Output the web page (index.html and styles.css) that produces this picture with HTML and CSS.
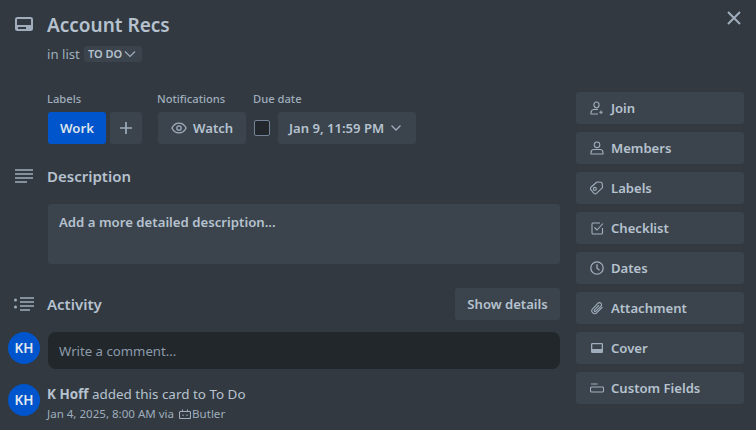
FILE: index.html
```html
<!DOCTYPE html>
<html lang="en">
<head>
<meta charset="utf-8">
<title>Account Recs</title>
<link rel="stylesheet" href="styles.css">
</head>
<body>
<div class="dialog">
  <button class="close" aria-label="Close">
    <svg viewBox="0 0 16 16" width="16" height="16"><path d="M2 2l12 12M14 2L2 14" class="st2"/></svg>
  </button>
  <header class="head">
    <svg class="gut-icon" viewBox="0 0 18 14" width="18" height="14"><path fill-rule="evenodd" d="M2.5 0h13A2.5 2.5 0 0 1 18 2.5v9a2.5 2.5 0 0 1-2.5 2.5h-13A2.5 2.5 0 0 1 0 11.500v-9A2.500 2.500 0 0 1 2.500 0zm0 2a.5.5 0 0 0-.5.500V8h14V2.500a.5.500 0 0 0-.5-.5zM3 10v2h8v-2z" fill="#9fadbc"/></svg>
    <div>
      <h1 class="title">Account Recs</h1>
      <p class="inlist">in list <span class="listpill">TO DO<svg viewBox="0 0 12 8" width="12" height="8"><path d="M1 1.500l5 5 5-5" class="st1"/></svg></span></p>
    </div>
  </header>
  <div class="columns">
    <main class="main">
      <div class="meta">
        <div class="meta-group labels-group">
          <div class="meta-label">Labels</div>
          <div class="meta-row">
            <span class="label-work">Work</span>
            <span class="btn square"><svg viewBox="0 0 14 14" width="14" height="14"><path d="M7 1v12M1 7h12" class="st15"/></svg></span>
          </div>
        </div>
        <div class="meta-group">
          <div class="meta-label">Notifications</div>
          <div class="meta-row">
            <span class="btn watch"><svg viewBox="0 0 16 12" width="16" height="12"><path d="M.9 6C2.500 2.800 5 1.100 8 1.100S13.500 2.800 15.100 6C13.500 9.200 11 10.900 8 10.900S2.500 9.200.9 6z" class="st12"/><circle cx="8" cy="6" r="2.200" class="st12"/></svg>Watch</span>
          </div>
        </div>
        <div class="meta-group">
          <div class="meta-label">Due date</div>
          <div class="meta-row">
            <span class="check"></span>
            <span class="btn due">Jan 9, 11:59 PM<svg viewBox="0 0 12 8" width="12" height="8"><path d="M1.500 1.500l4.500 4.500 4.500-4.500" class="st12"/></svg></span>
          </div>
        </div>
      </div>

      <section class="sec-desc">
        <div class="sec-head">
          <svg class="gut-icon" viewBox="0 0 18 14" width="18" height="14"><path d="M0 1h18M0 5h18M0 9h18M0 13h12" class="st15"/></svg>
          <h2>Description</h2>
        </div>
        <div class="desc-box">Add a more detailed description...</div>
      </section>

      <section class="sec-act">
        <div class="sec-head">
          <svg class="gut-icon act-icon" viewBox="0 0 20 14" width="20" height="14"><circle cx="1.500" cy="3" r="1.500" fill="#9fadbc"/><circle cx="1.500" cy="10" r="1.500" fill="#9fadbc"/><path d="M6 1h14M6 5h14M6 9h14M6 13h10" class="st15"/></svg>
          <h2>Activity</h2>
          <span class="btn details">Show details</span>
        </div>
        <div class="comment-row">
          <span class="avatar">KH</span>
          <div class="comment">Write a comment...</div>
        </div>
        <div class="log-row">
          <span class="avatar">KH</span>
          <div class="log-body">
            <p class="log-text"><b>K Hoff</b> added this card to To Do</p>
            <p class="log-date">Jan 4, 2025, 8:00 AM via <svg class="butler-icon" viewBox="0 0 12 10" width="12" height="10"><path d="M1.500 2.500h9a1 1 0 0 1 1 1v5a1 1 0 0 1-1 1h-9a1 1 0 0 1-1-1v-5a1 1 0 0 1 1-1zM3.500 2.500v-2M8.500 2.500v-2M4 5.500v1.500M8 5.500v1.500" class="st1s"/></svg><span>Butler</span></p>
          </div>
        </div>
      </section>
    </main>

    <aside class="side">
      <span class="btn side-btn"><svg viewBox="0 0 14 14" width="14" height="14"><path d="M6.500 1a2.600 2.600 0 0 0-2.600 2.800c0 1.600 1.100 3 2.600 3s2.600-1.400 2.600-3A2.600 2.600 0 0 0 6.500 1zM8 8.400c-.5.100-3.200-.1-4.300.100C2 8.800 1 10 1 11.500V13h7M11 9.500v3.500M9.300 11.200h3.500" class="st1s"/></svg>Join</span>
      <span class="btn side-btn"><svg viewBox="0 0 14 14" width="14" height="14"><circle cx="7" cy="3.800" r="2.800" class="st1s"/><path d="M4 8.500h6c1.700 0 3 1.300 3 3V13H1v-1.500c0-1.700 1.300-3 3-3z" class="st1s"/></svg>Members</span>
      <span class="btn side-btn"><svg viewBox="0 0 14 14" width="14" height="14"><path d="M1.200 6L6.300 1.500a2 2 0 0 1 1.400-.5l3.200.3a1.500 1.500 0 0 1 1.300 1.300l.3 3.200a2 2 0 0 1-.5 1.400L6.700 12.200a2 2 0 0 1-2.800.1L1.100 9a2 2 0 0 1 .1-3z" class="st1s"/><circle cx="4.800" cy="7.900" r="1.500" class="st1s"/></svg>Labels</span>
      <span class="btn side-btn"><svg viewBox="0 0 14 14" width="14" height="14"><path d="M10 2H3a1 1 0 0 0-1 1v9a1 1 0 0 0 1 1h8.500a1 1 0 0 0 1-1V7M4.500 6.500l2.500 2.500L13 2.500" class="st1s"/></svg>Checklist</span>
      <span class="btn side-btn"><svg viewBox="0 0 14 14" width="14" height="14"><circle cx="7" cy="7" r="6.200" class="st12"/><path d="M7 3.200v4l2.500 2" class="st12"/></svg>Dates</span>
      <span class="btn side-btn"><svg viewBox="0 0 14 14" width="14" height="14"><path d="M12.400 6L6.700 11.900a2.600 2.600 0 0 1-3.900 0l-.2-.2a2.800 2.800 0 0 1 0-3.900L8 2.200a2 2 0 0 1 2.900 0 2 2 0 0 1 0 2.900L6 10.200a1 1 0 0 1-1.500-1.400L9 4.200" class="st1s"/></svg>Attachment</span>
      <span class="btn side-btn"><svg viewBox="0 0 14 12" width="14" height="12"><path fill-rule="evenodd" d="M2.200 1h9.600A1.200 1.200 0 0 1 13 2.200v7.600a1.200 1.200 0 0 1-1.200 1.200H2.200A1.200 1.200 0 0 1 1 9.800V2.200A1.200 1.200 0 0 1 2.200 1zM2.300 2.300V7h9.400V2.300z" fill="#9fadbc"/></svg>Cover</span>
      <span class="btn side-btn"><svg viewBox="0 0 14 10" width="14" height="10"><path d="M1 1h6.500M2 4h10.500a1 1 0 0 1 1 1v3a1 1 0 0 1-1 1H1.500a1 1 0 0 1-1-1V5a1 1 0 0 1 1-1z" class="st1s"/></svg>Custom Fields</span>
    </aside>
  </div>
</div>
</body>
</html>
```

FILE: styles.css
```css
* { box-sizing: border-box; }
html, body { margin: 0; height: 100%; overflow: hidden; }
body {
  background: #323940;
  color: #b6c2cf;
  font-family: "Noto Sans", "Open Sans", sans-serif;
  font-size: 13.2px;
}
h1, h2, p { margin: 0; }
svg { display: block; flex: none; }
.st1, .st1s, .st12, .st15, .st2 { fill: none; stroke: #9fadbc; }
.st1 { stroke-width: 1.2; }
.st1s { stroke-width: 1.1; }
.st12 { stroke-width: 1.3; }
.st15 { stroke-width: 1.7; }
.st2 { stroke-width: 2; }

.dialog { position: relative; width: 756px; height: 430px; padding: 11px 12px 0 8px; }
.close { position: absolute; top: 10px; right: 14px; width: 16px; height: 16px; padding: 0; border: 0; background: none; }

.head { display: flex; align-items: flex-start; height: 81px; }
.gut-icon { margin-left: 7px; }
.head .gut-icon { margin-top: 6px; margin-right: 14px; }
.title { font-size: 19px; font-weight: 600; line-height: 28px; color: #b6c2cf; }
.inlist { font-size: 13.2px; line-height: 20px; color: #9fadbc; margin-top: 5px; display: flex; align-items: center; gap: 4px; }
.listpill {
  display: inline-flex; align-items: center; gap: 2px; height: 16px; padding: 0 6px 0 4px;
  background: #3b444c; border-radius: 3px;
  font-size: 11px; font-weight: 600; color: #b6c2cf;
}

.columns { display: flex; gap: 16px; }
.main { width: 552px; flex: none; }
.side { width: 168px; flex: none; display: flex; flex-direction: column; gap: 8px; }

.btn {
  display: flex; align-items: center;
  background: #3b444c; color: #b6c2cf; border-radius: 3px;
  font-weight: 600; font-size: 13.1px; height: 32px;
}
.side-btn { padding-left: 14px; gap: 7px; }
.side-btn svg { width: 14px; }

.meta { display: flex; gap: 8px; padding-left: 40px; }
.labels-group { margin-right: 8px; }
.meta-label { font-size: 11.2px; font-weight: 500; line-height: 14px; color: #9fadbc; margin: 0 0 6px -1px; }
.meta-row { display: flex; gap: 4px; align-items: center; }
.label-work {
  display: flex; align-items: center; justify-content: center;
  width: 58px; height: 32px; background: #0055cc; color: #dee4ea;
  border-radius: 3px; font-weight: 600;
}
.square { width: 32px; justify-content: center; }
.watch { width: 88px; padding-left: 13px; gap: 6px; }
.check { width: 16px; height: 16px; margin-right: 4px; background: #22272b; border: 1px solid #738496; border-radius: 2px; }
.due { width: 138px; padding-left: 11px; gap: 6px; }

.sec-desc { margin-top: 16px; }
.sec-head { display: flex; align-items: center; height: 32px; }
.sec-head .gut-icon { margin-right: 14px; }
.sec-head .act-icon { margin-left: 6px; margin-right: 13px; }
.sec-head h2 { font-size: 15px; font-weight: 600; line-height: 20px; color: #b6c2cf; }
.desc-box {
  margin: 12px 0 0 40px; height: 60px; padding: 8px 11px;
  background: #3b444c; border-radius: 3px;
  font-weight: 600; line-height: 20px; color: #b6c2cf;
}
.sec-act { margin-top: 24px; }
.details { margin-left: auto; width: 105px; justify-content: center; }
.comment-row { display: flex; align-items: flex-start; gap: 8px; margin-top: 12px; }
.avatar {
  flex: none; width: 32px; height: 32px; border-radius: 50%;
  background: #0055cc; color: #e3e9ef;
  display: flex; align-items: center; justify-content: center;
  font-size: 13.5px; font-weight: 600;
}
.comment {
  flex: 1; height: 37px; padding: 0 11px;
  display: flex; align-items: center;
  background: #22272b; border-radius: 8px; color: #8c9bab;
}
.log-row { display: flex; gap: 7px; margin-top: 15px; }
.log-text { font-size: 13.45px; line-height: 20px; color: #b6c2cf; }
.log-text b { font-weight: 700; }
.log-date { font-size: 11.55px; line-height: 16px; color: #9fadbc; display: flex; align-items: center; gap: 1px; margin-top: 2px; white-space: pre; }
.butler-icon { margin-left: 1px; }
```
